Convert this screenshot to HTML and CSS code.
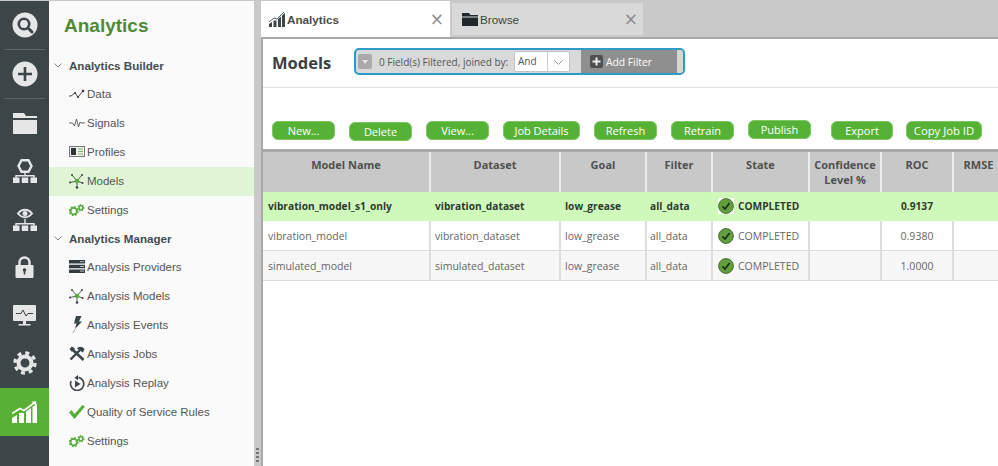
FILE: index.html
```html
<!DOCTYPE html>
<html lang="en">
<head>
<meta charset="utf-8">
<title>Analytics</title>
<link rel="stylesheet" href="styles.css">
</head>
<body>
<svg class="defs" width="0" height="0" aria-hidden="true">
  <symbol id="i-gears" viewBox="0 0 17 12">
    <circle cx="5" cy="7.2" r="3.4" fill="none" stroke="#58ad3a" stroke-width="2"/>
    <circle cx="5" cy="7.2" r="4.6" fill="none" stroke="#58ad3a" stroke-width="1.6" stroke-dasharray="1.8 1.8"/>
    <circle cx="12.6" cy="3.6" r="2.1" fill="none" stroke="#58ad3a" stroke-width="1.6"/>
    <circle cx="12.6" cy="3.6" r="3.2" fill="none" stroke="#58ad3a" stroke-width="1.3" stroke-dasharray="1.4 1.3"/>
  </symbol>
  <symbol id="i-net" viewBox="0 0 16 16">
    <path d="M3 2 8 8 13 2M8 8 1 9.500M8 8 8 14M8 8 13.500 10" fill="none" stroke="#3c4649" stroke-width="0.900"/>
    <circle cx="8" cy="8" r="2.300" fill="#58ad3a"/>
    <circle cx="3" cy="2" r="1" fill="#3c4649"/><circle cx="13" cy="2" r="1" fill="#3c4649"/>
    <circle cx="1" cy="9.500" r="1" fill="#3c4649"/><circle cx="8" cy="14.500" r="1.300" fill="#3c4649"/><circle cx="13.500" cy="10" r="1" fill="#3c4649"/>
  </symbol>
  <symbol id="i-done" viewBox="0 0 16 16">
    <circle cx="8" cy="8" r="7.400" fill="#649f3f" stroke="#4f6b3c" stroke-width="1"/>
    <path d="M4.400 8.400 7 11 11.600 5" fill="none" stroke="#1c3010" stroke-width="1.700"/>
  </symbol>
</svg>
<div class="app">
  <nav class="rail">
    <a class="rail-item rail-first">
      <svg width="26" height="26" viewBox="0 0 26 26"><circle cx="13" cy="13" r="12.500" fill="#e6e6e6"/><circle cx="12" cy="12" r="5.200" fill="none" stroke="#3c4649" stroke-width="2.600"/><path d="M16 16 20 20" stroke="#3c4649" stroke-width="3" stroke-linecap="round"/></svg>
    </a>
    <a class="rail-item rail-first">
      <svg width="26" height="26" viewBox="0 0 26 26"><circle cx="13" cy="13" r="12.500" fill="#e6e6e6"/><path d="M13 6V20M6 13H20" stroke="#3c4649" stroke-width="2.600"/></svg>
    </a>
    <a class="rail-item">
      <svg width="24" height="21" viewBox="0 0 24 21"><path d="M0 0H11L13 3H24V5H0Z" fill="#e6e6e6"/><path d="M0 7H24V21H0Z" fill="#e6e6e6"/></svg>
    </a>
    <a class="rail-item">
      <svg width="24" height="24" viewBox="0 0 24 24"><path d="M8.500 1.300H15.500L18.500 7 15.500 12.700H8.500L5.500 7Z" fill="none" stroke="#e6e6e6" stroke-width="2.400"/><path d="M12 14V17M3 19V16.800H21V19" fill="none" stroke="#e6e6e6" stroke-width="1.400"/><path d="M0 18.500H6.500V24H0ZM8.800 18.500H15.200V24H8.800ZM17.500 18.500H24V24H17.500Z" fill="#e6e6e6"/></svg>
    </a>
    <a class="rail-item">
      <svg width="24" height="24" viewBox="0 0 24 24"><path d="M5 6.500C9 1.500 15 1.500 19 6.500 15 11.500 9 11.500 5 6.500Z" fill="none" stroke="#e6e6e6" stroke-width="2"/><circle cx="12" cy="6.500" r="2.500" fill="#e6e6e6"/><path d="M12 12V17M3 19V16.800H21V19" fill="none" stroke="#e6e6e6" stroke-width="1.400"/><path d="M0 18.500H6.500V24H0ZM8.800 18.500H15.200V24H8.800ZM17.500 18.500H24V24H17.500Z" fill="#e6e6e6"/></svg>
    </a>
    <a class="rail-item">
      <svg width="19" height="22" viewBox="0 0 19 22"><path d="M4.500 10V6.500a5 5 0 0 1 10 0V10" fill="none" stroke="#e6e6e6" stroke-width="2.400"/><rect x="0.500" y="9" width="18" height="13" rx="1" fill="#e6e6e6"/><circle cx="9.500" cy="14" r="1.800" fill="#3c4649"/><path d="M9.500 14V18.500" stroke="#3c4649" stroke-width="1.600"/></svg>
    </a>
    <a class="rail-item">
      <svg width="23" height="21" viewBox="0 0 23 21"><rect width="23" height="16" rx="1" fill="#e6e6e6"/><path d="M3 8.500H8L10 5 13 11 15 8.500H20" fill="none" stroke="#3c4649" stroke-width="1"/><path d="M10 16H13V19H10ZM5.500 19H17.500V20.500H5.500Z" fill="#e6e6e6"/></svg>
    </a>
    <a class="rail-item">
      <svg width="24" height="24" viewBox="0 0 24 24"><circle cx="12" cy="12" r="6.500" fill="none" stroke="#e6e6e6" stroke-width="4"/><circle cx="12" cy="12" r="10" fill="none" stroke="#e6e6e6" stroke-width="3.400" stroke-dasharray="3.900 3.950"/></svg>
    </a>
    <a class="rail-item rail-active">
      <svg width="25" height="22" viewBox="0 0 25 22"><path d="M0 12.500 8 7.500 12 9.500 22 2" fill="none" stroke="#fff" stroke-width="1.600"/><path d="M19.500 0.500H24V4.500Z" fill="#fff"/><path d="M0 22V17L5 14V22ZM7 22V12H12V22ZM14 22V10.500L19 7V22ZM20.500 22V6L25 2.500V22Z" fill="#fff"/></svg>
    </a>
  </nav>

  <aside class="panel">
    <h1 class="panel-title">Analytics</h1>
    <h2 class="section"><svg class="chev" width="8" height="5" viewBox="0 0 8 5"><path d="M0.500 0.500 4 4 7.500 0.500" fill="none" stroke="#888" stroke-width="1"/></svg>Analytics Builder</h2>
    <a class="item"><svg class="ic" width="16" height="10" viewBox="0 0 16 10"><path d="M0 7H2L6 4 9 8 14 2" fill="none" stroke="#444" stroke-width="1"/><circle cx="6" cy="4" r="1.100" fill="#333"/><circle cx="9" cy="8" r="1.100" fill="#333"/><circle cx="14" cy="2" r="1.300" fill="#333"/></svg>Data</a>
    <a class="item"><svg class="ic" width="16" height="10" viewBox="0 0 16 10"><path d="M0 5H3.500L5.500 8 7.500 1 9.500 9 11 4 12 5H16" fill="none" stroke="#555" stroke-width="0.900"/></svg>Signals</a>
    <a class="item"><svg class="ic" width="16" height="11" viewBox="0 0 16 11"><rect x="0.500" y="0.500" width="15" height="10" fill="#eee" stroke="#777"/><rect x="2" y="2" width="5" height="7" fill="#333"/><path d="M9 3H14M9 5.500H14M9 8H14" stroke="#58ad3a" stroke-width="0.800"/></svg>Profiles</a>
    <a class="item item-on"><svg class="ic" width="16" height="16"><use href="#i-net"/></svg>Models</a>
    <a class="item"><svg class="ic" width="16" height="12"><use href="#i-gears"/></svg>Settings</a>
    <h2 class="section"><svg class="chev" width="8" height="5" viewBox="0 0 8 5"><path d="M0.500 0.500 4 4 7.500 0.500" fill="none" stroke="#888" stroke-width="1"/></svg>Analytics Manager</h2>
    <a class="item"><svg class="ic" width="16" height="13" viewBox="0 0 16 13"><path d="M0 0H16V3.500H0ZM0 4.700H16V8.200H0ZM0 9.400H16V13H0Z" fill="#333c40"/><path d="M11 1.700H15M11 6.400H15M11 11.100H15" stroke="#ddd" stroke-width="0.800"/></svg>Analysis Providers</a>
    <a class="item"><svg class="ic" width="16" height="16"><use href="#i-net"/></svg>Analysis Models</a>
    <a class="item"><svg class="ic" width="16" height="17" viewBox="0 0 16 17"><path d="M7 0H12.500L10 5.500H13L6 13 7.500 7.500H5Z" fill="#3c4649"/><path d="M6 13 4 17" stroke="#999" stroke-width="0.800"/></svg>Analysis Events</a>
    <a class="item"><svg class="ic" width="16" height="15" viewBox="0 0 16 15"><path d="M3 3 14.500 14" stroke="#3c4649" stroke-width="2.600"/><path d="M1.500 13.500 11 4" stroke="#3c4649" stroke-width="2.400"/><path d="M8 2.500C10 0 13 0 15.500 3L14 6.500 11.500 5Z" fill="#3c4649"/><path d="M0.500 3 3 0.500 6 2.500 3 6Z" fill="#3c4649"/></svg>Analysis Jobs</a>
    <a class="item"><svg class="ic" width="16" height="16" viewBox="0 0 16 16"><path d="M9.500 2.400A6.600 6.600 0 1 1 2.200 6" fill="none" stroke="#3c4649" stroke-width="1.600"/><path d="M9 0V5.500L5.500 2.700Z" fill="#3c4649"/><path d="M6 5.500 11.500 9 6 12.500Z" fill="#3c4649"/></svg>Analysis Replay</a>
    <a class="item"><svg class="ic" width="16" height="14" viewBox="0 0 16 14"><path d="M0 7.500 5.500 14 16 1.500 13.500 0 5.500 9 2.500 5Z" fill="#58ad3a"/></svg>Quality of Service Rules</a>
    <a class="item"><svg class="ic" width="16" height="12"><use href="#i-gears"/></svg>Settings</a>
  </aside>

  <div class="splitter"><span class="grip"></span></div>

  <main class="main">
    <div class="tabs">
      <div class="tab tab-on">
        <svg class="tab-ic" width="16" height="15" viewBox="0 0 16 15"><path d="M0 10 5 6 8 7 15 0" fill="none" stroke="#3c4649" stroke-width="0.900"/><path d="M0 15V12L3 10V15ZM4.500 15V8.500H7.500V15ZM9 15V7L12 4.500V15ZM13 15V3.500L16 1V15Z" fill="#3c4649"/></svg>
        <span class="tab-label">Analytics</span><span class="tab-x">×</span>
      </div>
      <div class="tab tab-off">
        <svg class="tab-ic" width="16" height="13" viewBox="0 0 16 13"><path d="M0 0H7L8.500 2H16V3.500H0ZM0 4.500H16V13H0Z" fill="#20282b"/></svg>
        <span class="tab-label">Browse</span><span class="tab-x">×</span>
      </div>
    </div>
    <div class="content">
      <header class="head">
        <h2 class="head-title">Models</h2>
        <div class="filter">
          <div class="filter-left">
            <span class="filter-arrow"></span>
            <span class="filter-text">0 Field(s) Filtered, joined by:</span>
            <span class="select"><span class="select-val">And</span><span class="select-btn"><svg width="9" height="5" viewBox="0 0 9 5"><path d="M0.500 0.500 4.500 4.500 8.500 0.500" fill="none" stroke="#999" stroke-width="1"/></svg></span></span>
          </div>
          <div class="filter-add">
            <svg width="13" height="13" viewBox="0 0 13 13"><rect width="13" height="13" rx="2" fill="#505050"/><path d="M6.500 2.500V10.500M2.500 6.500H10.500" stroke="#eee" stroke-width="2"/></svg>
            <span>Add Filter</span>
          </div>
          <div class="filter-end"></div>
        </div>
      </header>
      <div class="toolbar">
        <button class="btn">New...</button>
        <button class="btn btn-low">Delete</button>
        <button class="btn">View...</button>
        <button class="btn btn-wide">Job Details</button>
        <button class="btn">Refresh</button>
        <button class="btn">Retrain</button>
        <button class="btn btn-high">Publish</button>
        <button class="btn btn-far">Export</button>
        <button class="btn btn-last">Copy Job ID</button>
      </div>
      <table class="grid">
        <colgroup><col class="c1"><col class="c2"><col class="c3"><col class="c4"><col class="c5"><col class="c6"><col class="c7"><col class="c8"></colgroup>
        <thead>
          <tr><th>Model Name</th><th>Dataset</th><th>Goal</th><th>Filter</th><th>State</th><th>Confidence Level %</th><th>ROC</th><th>RMSE</th></tr>
        </thead>
        <tbody>
          <tr class="row-on"><td>vibration_model_s1_only</td><td>vibration_dataset</td><td>low_grease</td><td class="filter-cell">all_data</td><td><span class="state"><svg width="16" height="16"><use href="#i-done"/></svg>COMPLETED</span></td><td></td><td class="num">0.9137</td><td></td></tr>
          <tr><td>vibration_model</td><td>vibration_dataset</td><td>low_grease</td><td class="filter-cell">all_data</td><td><span class="state"><svg width="16" height="16"><use href="#i-done"/></svg>COMPLETED</span></td><td></td><td class="num">0.9380</td><td></td></tr>
          <tr class="row-alt"><td>simulated_model</td><td>simulated_dataset</td><td>low_grease</td><td class="filter-cell">all_data</td><td><span class="state"><svg width="16" height="16"><use href="#i-done"/></svg>COMPLETED</span></td><td></td><td class="num">1.0000</td><td></td></tr>
        </tbody>
      </table>
    </div>
  </main>
</div>
</body>
</html>
```

FILE: styles.css
```css
* { box-sizing: border-box; }
html, body { margin: 0; height: 100%; overflow: hidden; background: #fff; }
.defs { position: absolute; }
h1, h2 { margin: 0; }

.app { display: flex; height: 466px; width: 998px; overflow: hidden; border-top: 1px solid #c8c8c8; }

/* icon rail */
.rail { width: 49px; flex: none; background: #3c4649; display: flex; flex-direction: column; }
.rail-item { height: 48px; display: flex; align-items: center; justify-content: center; flex: none; }
.rail-first { height: 49px; position: relative; padding-bottom: 1px; }
.rail-first::after { content: ""; position: absolute; left: 4px; right: 4px; bottom: 0; height: 1px; background: #5c6568; }
.rail-active { background: #58b137; margin-top: 1px; }

/* menu panel */
.panel { width: 205px; flex: none; background: #fafafa; font-family: "Liberation Sans", Arial, sans-serif; }
.panel-title { height: 51px; padding: 13px 0 0 15px; font-size: 19px; line-height: 23px; font-weight: 700; color: #4e8a33; }
.section { height: 28px; padding: 0 0 2px 5px; display: flex; align-items: center; font-size: 11.600px; font-weight: 700; color: #444d52; }
.chev { margin: 0 7px 0 0; flex: none; }
.item { height: 29px; padding: 0 0 2px 20px; display: flex; align-items: center; font-size: 11.500px; color: #555; }
.item-on { background: #e0f5d5; }
.ic { width: 16px; flex: none; margin-right: 2px; }

.splitter { width: 7px; flex: none; background: #c9c9c9; position: relative; }
.grip { position: absolute; left: 2px; top: 447px; width: 3px; height: 14px; background: repeating-linear-gradient(#777 0 2px, transparent 2px 4px); }

/* main */
.main { flex: 1; min-width: 0; display: flex; flex-direction: column; background: #c9c9c9; overflow: hidden; }
.tabs { height: 36px; flex: none; display: flex; align-items: flex-start; gap: 2px; font-family: "Liberation Sans", Arial, sans-serif; }
.tab { display: flex; align-items: center; width: 191px; flex: none; font-size: 11.700px; color: #444; }
.tab-on { height: 36px; width: 190px; margin-left: -1px; padding-left: 9px; background: #fff; font-weight: 700; color: #4c4c4c; }
.tab-off { height: 32px; margin-top: 2px; padding-left: 10px; background: #d9d9d9; }
.tab-ic { margin-right: 2px; flex: none; }
.tab-label { flex: 1; }
.tab-x { font-size: 17px; font-weight: 400; color: #8d8d8d; padding-right: 6px; line-height: 1; font-family: "DejaVu Sans", sans-serif; }
.tab-off .tab-x { padding-right: 5px; }

.content { flex: 1; background: #fff; border-top: 2px solid #a9a9a9; border-left: 2px solid #a9a9a9; font-family: "Open Sans", sans-serif; min-height: 0; }
.head { height: 49px; display: flex; align-items: flex-start; border-bottom: 1px solid #e0e0e0; padding-left: 9px; }
.head-title { font-size: 16.500px; line-height: 24px; font-weight: 700; color: #3a3f42; margin-top: 12px; width: 82px; font-family: "Open Sans", sans-serif; }
.filter { margin-top: 9px; width: 331px; height: 27px; border: 2px solid #2f9cc7; border-radius: 5px; display: flex; background: #d9d9d9; overflow: hidden; font-size: 10px; }
.filter-left { width: 225px; flex: none; display: flex; align-items: center; padding-left: 2px; color: #555; }
.filter-arrow { width: 14px; height: 15px; background: #aaa; border-radius: 2px; margin-right: 7px; position: relative; flex: none; }
.filter-arrow::after { content: ""; position: absolute; left: 4px; top: 6px; border: 3px solid transparent; border-top: 4px solid #e4e4e4; }
.filter-text { width: 135px; flex: none; white-space: nowrap; font-size: 10px; }
.select { display: flex; width: 56px; height: 21px; background: #fff; border: 1px solid #c4c4c4; border-radius: 2px; flex: none; }
.select-val { width: 33px; padding-left: 3px; line-height: 18px; border-right: 1px solid #ccc; color: #555; }
.select-btn { flex: 1; display: flex; align-items: center; justify-content: center; padding-top: 2px; }
.filter-add { width: 96px; flex: none; background: #8f8f8f; color: #fff; display: flex; align-items: center; gap: 3px; padding-left: 9px; font-size: 10.300px; }
.filter-end { flex: 1; background: #d4d8d0; }

.toolbar { height: 61px; padding: 33px 0 0 9px; display: flex; align-items: flex-start; gap: 14px; }
.btn { width: 63px; height: 19px; flex: none; padding: 0; border: 1px solid #7cc764; border-radius: 6px; background: #56b236; color: #fff; font: 11px/16px "Open Sans", sans-serif; text-align: center; }
.btn-wide { width: 77px; }
.btn-low { margin-top: 1px; }
.btn-high { margin-top: -1px; }
.btn-far { margin-left: 6px; width: 62px; }
.btn-last { width: 76px; margin-left: -1px; font-size: 11.300px; }

.grid { border-collapse: collapse; table-layout: fixed; width: 741px; border-top: 3px solid #a9a9a9; font-size: 10.500px; color: #666; }
.c1 { width: 167px; } .c2 { width: 130px; } .c3 { width: 86px; } .c4 { width: 66px; } .c5 { width: 97px; } .c6 { width: 72px; } .c7 { width: 72px; } .c8 { width: 51px; }
.grid th { height: 41px; background: #c8c8c8; color: #505050; font-weight: 700; font-size: 11px; line-height: 15px; vertical-align: top; padding: 5px 4px 0; border-right: 2px solid #ececec; }
.grid td { height: 30px; padding: 0 0 0 4px; border-right: 2px solid #dedede; border-bottom: 1px solid #dcdcdc; white-space: nowrap; overflow: hidden; }
.grid td:first-child { padding-left: 5px; }
.grid .filter-cell { padding-left: 3px; }
.grid .num { text-align: center; padding: 0; }
.row-on td { height: 29px; background: #cff8bb; color: #2f3a2f; font-weight: 700; font-size: 10.200px; border-right-color: #cff8bb; border-bottom-color: #cff8bb; }
.row-alt td { background: #f7f7f7; }
.state { display: flex; align-items: center; gap: 4px; padding-left: 1px; }
.row-on .state svg { background: #fff; }
```
